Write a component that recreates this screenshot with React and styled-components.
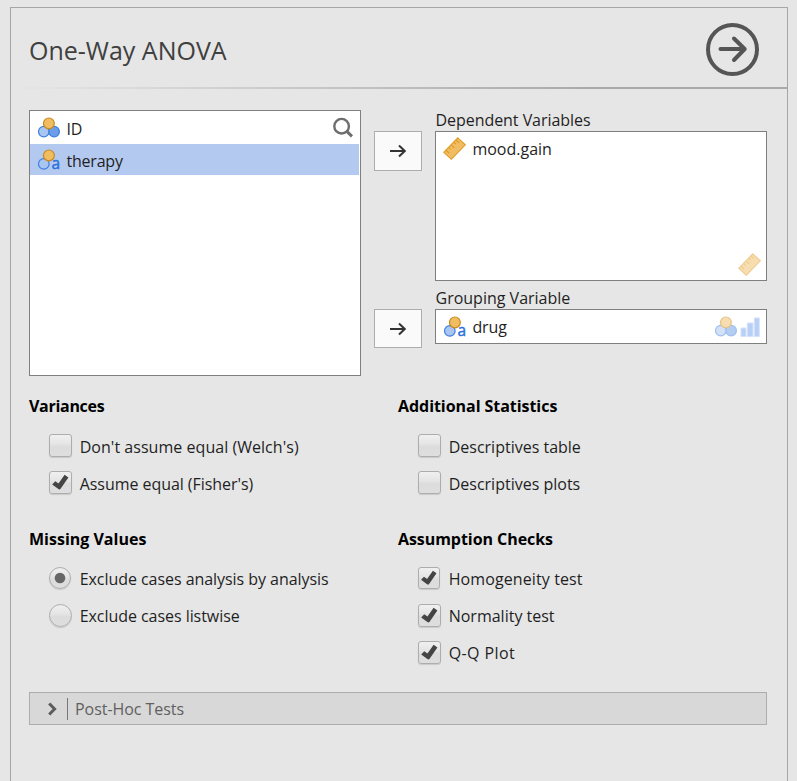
import React from 'react';
import styled, { createGlobalStyle } from 'styled-components';

const GlobalStyle = createGlobalStyle`
  *, *::before, *::after { box-sizing: border-box; }
  html, body { margin: 0; background: #e6e6e6; overflow: hidden; }
  body { font-family: "Open Sans", "Noto Sans", sans-serif; font-size: 16px; color: #1f1f1f; }
  svg { display: block; flex: none; overflow: visible; }
`;

const Page = styled.main`
  height: 781px;
  padding: 7px 9px 0 10px;
  overflow: hidden;
`;

const Panel = styled.section`
  height: 790px;
  border: 1px solid #a6a6a6;
`;

const Header = styled.header`
  display: flex;
  align-items: center;
  justify-content: space-between;
  height: 79px;
  padding: 4px 28px 0 18px;
`;

const Title = styled.h1`
  margin: 0;
  font-size: 25px;
  font-weight: 400;
  line-height: 40px;
  color: #404040;
  padding-top: 1px;
`;

const Rule = styled.div`
  height: 2px;
  margin-bottom: 1px;
  background: linear-gradient(to right, #e6e6e6 0, #a9a9a9 75%);
`;

const Content = styled.div`
  padding: 20px 20px 0 18px;
`;

const Assigner = styled.div`
  display: grid;
  grid-template-columns: 332px 48px 332px;
  column-gap: 13px;
  height: 266px;
`;

const Box = styled.div`
  display: flex;
  background: #fff;
  border: 1px solid #7f7f7f;
`;

const SourceBox = styled(Box)`
  flex-direction: column;
  padding-right: 1px;
`;

const TargetBox = styled(Box)`
  height: ${(p) => p.$height}px;
  justify-content: space-between;
`;

const Variable = styled.div`
  display: flex;
  align-items: center;
  gap: 6.4px;
  height: ${(p) => p.$height}px;
  padding: 0 6px 0 8px;
  background: ${(p) => (p.$selected ? '#b4c9ef' : 'transparent')};
`;

const Text = styled.span`
  flex: ${(p) => (p.$grow ? 1 : 'none')};
  line-height: 22px;
  white-space: nowrap;
  letter-spacing: ${(p) => p.$track || 0}px;
  padding-top: ${(p) => p.$drop || 0}px;
`;

const Column = styled.div`
  display: flex;
  flex-direction: column;
`;

const ButtonColumn = styled(Column)`
  justify-content: space-between;
  padding: 21px 0 28px;
`;

const MoveButton = styled.button`
  display: flex;
  align-items: center;
  justify-content: center;
  width: 48px;
  height: ${(p) => p.$height}px;
  padding: 0;
  background: #fafafa;
  border: 1px solid #adadad;
`;

const TargetLabel = styled.div`
  height: ${(p) => p.$height}px;
  display: flex;
  align-items: flex-end;
  padding-left: 0.5px;
  line-height: 22px;
  letter-spacing: ${(p) => p.$track || 0}px;
`;

const Allowed = styled.div`
  display: flex;
  align-items: flex-end;
  gap: 3px;
  padding: 0 ${(p) => p.$right}px ${(p) => p.$bottom}px 0;
  opacity: 0.5;
`;

const Options = styled.div`
  display: grid;
  grid-template-columns: 369px 369px;
  row-gap: 26px;
  padding: 18px 0 21px;
`;

const Heading = styled.h2`
  margin: 0 0 9px;
  font-size: 16px;
  font-weight: 700;
  line-height: 24px;
  color: #000;
  letter-spacing: ${(p) => p.$track || 0}px;
`;

const Option = styled.label`
  display: flex;
  align-items: flex-start;
  height: 37px;
  padding: 7px 0 0 20px;
  gap: ${(p) => 30.7 - p.$size}px;
`;

const Mark = styled.span`
  display: block;
  width: ${(p) => p.$size}px;
  height: ${(p) => p.$size}px;
  border: 1px solid #adadad;
  border-radius: ${(p) => (p.$round ? '50%' : '3px')};
  background: linear-gradient(#f0f0f0, #e4e4e4 45%, #dcdcdc 55%, #dedede);
  box-shadow: 0 1px 1px rgba(0, 0, 0, 0.12);
`;

const Collapser = styled.div`
  display: flex;
  align-items: center;
  height: 33px;
  padding-left: 17.5px;
  background: #d8d8d8;
  border: 1px solid #adadad;
  color: #606060;
`;

const Divider = styled.span`
  width: 1px;
  height: 22px;
  margin: 0 7px 0 10.5px;
  background: #777;
`;

const RunIcon = () => (
  <svg width="53" height="53" viewBox="0 0 53 53" fill="none" stroke="#555" strokeWidth="4" strokeLinecap="round" strokeLinejoin="round">
    <circle cx="26.5" cy="26.5" r="24.5" />
    <path d="M14.5 26H38.5M28 15.5L38.7 26L28 37" />
  </svg>
);

const ArrowIcon = () => (
  <svg width="16" height="14" viewBox="0 0 16 14" fill="none" stroke="#333" strokeWidth="2">
    <path d="M0 7H14.5M9 1.5L14.8 7L9 12.5" />
  </svg>
);

const SearchIcon = () => (
  <svg width="20" height="20" viewBox="0 0 20 20" fill="none" stroke="#6e6e6e">
    <circle cx="8.6" cy="8.2" r="7.3" strokeWidth="2.4" />
    <path d="M13.8 13.3L19 18.3" strokeWidth="3" />
  </svg>
);

const NominalIcon = () => (
  <svg width="22" height="21" viewBox="0 0 22 21" strokeWidth="1.2">
    <circle cx="5.8" cy="14.6" r="5.3" fill="#a9c5f2" stroke="#3e7fe0" />
    <circle cx="16.1" cy="14.6" r="5.3" fill="#6b9de8" stroke="#3e7fe0" />
    <circle cx="10.9" cy="6.4" r="5.4" fill="#f0bd62" stroke="#c88a1c" />
  </svg>
);

const NominalTextIcon = () => (
  <svg width="22" height="21" viewBox="0 0 22 21" strokeWidth="1.2">
    <circle cx="5.8" cy="14.9" r="5.3" fill="#a9c5f2" stroke="#3e7fe0" />
    <circle cx="10.9" cy="6.4" r="5.4" fill="#f0bd62" stroke="#c88a1c" />
    <text x="13.6" y="20.3" fontSize="15.5" fill="#2a70dc" stroke="#2a70dc" strokeWidth="0.4">a</text>
  </svg>
);

const RulerIcon = () => (
  <svg width="22" height="23" viewBox="1 0 22 23" fill="none" stroke="#df9a22" strokeWidth="1.1">
    <path d="M14.8 0.8L22.3 7.8L8.3 22.3L0.8 15.2Z" fill="#f0bd62" />
    <path d="M3 13L6 16M5.6 10.4L7.6 12.4M8.2 7.8L11.2 10.8M10.8 5.1L12.8 7.1M13 2.8L16 5.8" />
  </svg>
);

const OrdinalIcon = () => (
  <svg width="20" height="20" viewBox="0 0 20 20" fill="#74a3ee" stroke="#a9c6f6" strokeWidth="1">
    <path d="M1 11H6V19.5H1ZM7.3 6H13V19.5H7.3ZM14.3 1H19.3V19.5H14.3Z" />
  </svg>
);

const CheckIcon = () => (
  <svg width="100%" height="100%" viewBox="1 1 21 21">
    <path d="M3.2 13.4L6.2 10.2L9.5 12.6L15.6 3.8L19.4 6.4L11.6 17.8Q10.6 19 9.4 18Z" fill="#444" />
  </svg>
);

const DotIcon = () => (
  <svg width="100%" height="100%" viewBox="0 0 20 20">
    <circle cx="10" cy="10" r="5.3" fill="#666" />
  </svg>
);

const ChevronIcon = () => (
  <svg width="9" height="14" viewBox="0 0 9 14" fill="none" stroke="#5c5c5c" strokeWidth="3">
    <path d="M1.2 1.5L6.6 7L1.2 12.5" />
  </svg>
);

const groups = [
  {
    title: 'Variances', track: -0.3, drop: 2,
    options: [
      { text: "Don't assume equal (Welch's)", track: 0.04, size: 23 },
      { text: "Assume equal (Fisher's)", track: -0.05, size: 23, on: true },
    ],
  },
  {
    title: 'Additional Statistics', track: -0.05, drop: 2,
    options: [
      { text: 'Descriptives table', size: 23 },
      { text: 'Descriptives plots', size: 23 },
    ],
  },
  {
    title: 'Missing Values', track: 0, drop: 1, round: true,
    options: [
      { text: 'Exclude cases analysis by analysis', track: -0.05, size: 22, on: true },
      { text: 'Exclude cases listwise', track: -0.05, size: 23 },
    ],
  },
  {
    title: 'Assumption Checks', track: -0.06, drop: 1,
    options: [
      { text: 'Homogeneity test', track: 0.1, size: 22, on: true },
      { text: 'Normality test', size: 23, on: true },
      { text: 'Q-Q Plot', track: 0.4, size: 23, on: true },
    ],
  },
];

function OptionGroup({ group }) {
  return (
    <div>
      <Heading $track={group.track}>{group.title}</Heading>
      {group.options.map((o) => (
        <Option key={o.text} $size={o.size}>
          <Mark $size={o.size} $round={group.round}>
            {o.on && (group.round ? <DotIcon /> : <CheckIcon />)}
          </Mark>
          <Text $track={o.track} $drop={group.drop}>{o.text}</Text>
        </Option>
      ))}
    </div>
  );
}

export default function App() {
  return (
    <Page>
      <GlobalStyle />
      <Panel>
        <Header>
          <Title>One-Way ANOVA</Title>
          <RunIcon />
        </Header>
        <Rule />
        <Content>
          <Assigner>
            <SourceBox>
              <Variable $height={33}>
                <NominalIcon />
                <Text $grow $drop={2}>ID</Text>
                <SearchIcon />
              </Variable>
              <Variable $height={31} $selected>
                <NominalTextIcon />
                <Text $track={-0.2} $drop={2}>therapy</Text>
              </Variable>
            </SourceBox>
            <ButtonColumn>
              <MoveButton $height={40}><ArrowIcon /></MoveButton>
              <MoveButton $height={39}><ArrowIcon /></MoveButton>
            </ButtonColumn>
            <Column>
              <TargetLabel $height={21} $track={-0.05}>Dependent Variables</TargetLabel>
              <TargetBox $height={150}>
                <Variable $height={33}>
                  <RulerIcon />
                  <Text $drop={1}>mood.gain</Text>
                </Variable>
                <Allowed $right={5} $bottom={4}><RulerIcon /></Allowed>
              </TargetBox>
              <TargetLabel $height={28}>Grouping Variable</TargetLabel>
              <TargetBox $height={35}>
                <Variable $height={33}>
                  <NominalTextIcon />
                  <Text $track={-0.1}>drug</Text>
                </Variable>
                <Allowed $right={6} $bottom={6}><NominalIcon /><OrdinalIcon /></Allowed>
              </TargetBox>
            </Column>
          </Assigner>
          <Options>
            {groups.map((g) => <OptionGroup key={g.title} group={g} />)}
          </Options>
          <Collapser>
            <ChevronIcon />
            <Divider />
            <Text $track={-0.05}>Post-Hoc Tests</Text>
          </Collapser>
        </Content>
      </Panel>
    </Page>
  );
}
